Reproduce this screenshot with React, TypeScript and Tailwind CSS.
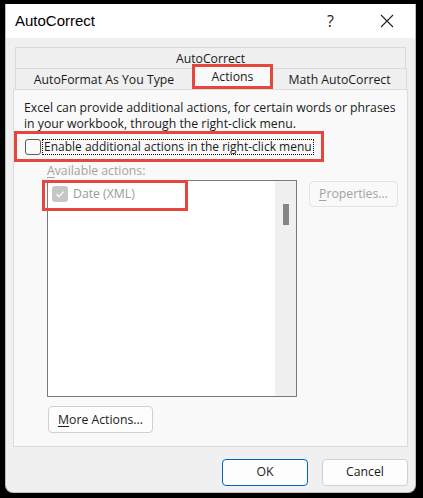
const red = 'border-[3px] border-[#e5473f]'

const App = () => {
  return (
    <div
      className="h-[498px] w-[423px] bg-black pl-[5px] pt-[4px] text-[12.25px] text-[#1a1a1a]"
      style={{ fontFamily: '"Open Sans", "Liberation Sans", Arial, sans-serif' }}
    >
      <div className="flex h-[489px] w-[411px] flex-col overflow-hidden rounded-b-[8px] border-x border-b border-[#bdbdbd] bg-[#f0f0f0]">
        {/* title bar */}
        <div className="flex h-[34px] shrink-0 items-center bg-white pl-[9px]">
          <span
            className="text-[15px] text-black"
            style={{ fontFamily: '"Liberation Sans", Arial, sans-serif' }}
          >
            AutoCorrect
          </span>
          <span className="ml-auto text-[16px] text-[#222]">?</span>
          <svg className="ml-[46px] mr-[21px]" width="14" height="14" viewBox="0 0 14 14">
            <path d="M1 1L13 13M13 1L1 13" stroke="#222" strokeWidth="1.1" />
          </svg>
        </div>

        {/* tabs */}
        <div className="ml-[9px] mr-[9px] mt-[9px] flex h-[21px] items-center justify-center border-x border-t border-[#dadada] bg-[#f0f0f0] pt-[1px] leading-[16px]">
          AutoCorrect
        </div>
        <div className="ml-[9px] flex h-[21px] items-end leading-[16px]">
          <div className="flex h-[21px] w-[177px] items-center justify-center border-l border-t border-[#dadada] pt-[2px]">
            AutoFormat As You Type
          </div>
          <div className={`flex h-[25px] w-[81px] items-center justify-center bg-[#f9f9f9] pt-[1px] ${red}`}>
            Actions
          </div>
          <div className="flex h-[21px] w-[134px] items-center justify-center border-r border-t border-[#dadada] pt-[2px]">
            Math AutoCorrect
          </div>
        </div>

        {/* panel */}
        <div className="mx-[7px] flex h-[358px] flex-col border border-[#dcdcdc] bg-[#f9f9f9] pl-[10px] pt-[10px] leading-[16px]">
          <p>
            Excel can provide additional actions, for certain words or phrases
            <br />
            in your workbook, through the right-click menu.
          </p>
          <div className={`-ml-[10px] mt-[-1px] flex h-[31px] w-[310px] items-center pl-[8px] ${red}`}>
            <div className="h-[16px] w-[16px] shrink-0 rounded-[3px] border border-[#5c5c5c] bg-[#fbfbfb]" />
            <span className="ml-[1px] whitespace-nowrap border border-dotted border-black px-px text-[12px] leading-[14px]">
              Enable additional actions in the right-click menu
            </span>
          </div>
          <div className="ml-[23px] mt-[1px] text-[#a3a3a3]">
            <span className="underline underline-offset-2">A</span>vailable actions:
          </div>
          <div className="flex">
            <div className="relative ml-[23px] mt-[1px] flex h-[217px] w-[250px] border border-[#7a7a7a] bg-white">
              <div className="flex h-[22px] flex-1 items-center pl-[4px] pt-[4px]">
                <div className="flex h-[16px] w-[16px] items-center justify-center rounded-[3px] bg-[#c6c6c6]">
                  <svg width="10" height="10" viewBox="0 0 10 10">
                    <path d="M1.5 5.2L4 7.6L8.6 2.6" stroke="white" strokeWidth="1.3" fill="none" />
                  </svg>
                </div>
                <span className="ml-[5px] text-[#9a9a9a]">Date (XML)</span>
              </div>
              <div className="flex w-[21px] justify-center bg-[#f0f0f0] pt-[23px]">
                <div className="h-[21px] w-[6px] bg-[#858585]" />
              </div>
              <div className={`absolute -left-[6px] -top-px h-[31px] w-[146px] ${red}`} />
            </div>
            <div className="ml-[12px] mt-[2px] flex h-[26px] w-[89px] items-center justify-center rounded-[4px] border border-[#e3e3e3] text-[#a3a3a3]">
              <span className="underline underline-offset-2">P</span>roperties...
            </div>
          </div>
          <div className="ml-[24px] mt-[9px] flex h-[27px] w-[105px] items-center justify-center rounded-[4px] border border-[#d0d0d0] bg-[#fdfdfd]">
            <span className="underline underline-offset-2">M</span>ore Actions...
          </div>
        </div>

        {/* footer */}
        <div className="mt-[12px] flex justify-end gap-[14px] pr-[7px]">
          <button className="h-[27px] w-[86px] rounded-[4px] border border-[#0067c0] bg-[#fdfdfd] text-[12.25px]">
            OK
          </button>
          <button className="h-[27px] w-[86px] rounded-[4px] border border-[#d0d0d0] bg-[#fdfdfd] text-[12.25px]">
            Cancel
          </button>
        </div>
      </div>
    </div>
  )
}

export default App
